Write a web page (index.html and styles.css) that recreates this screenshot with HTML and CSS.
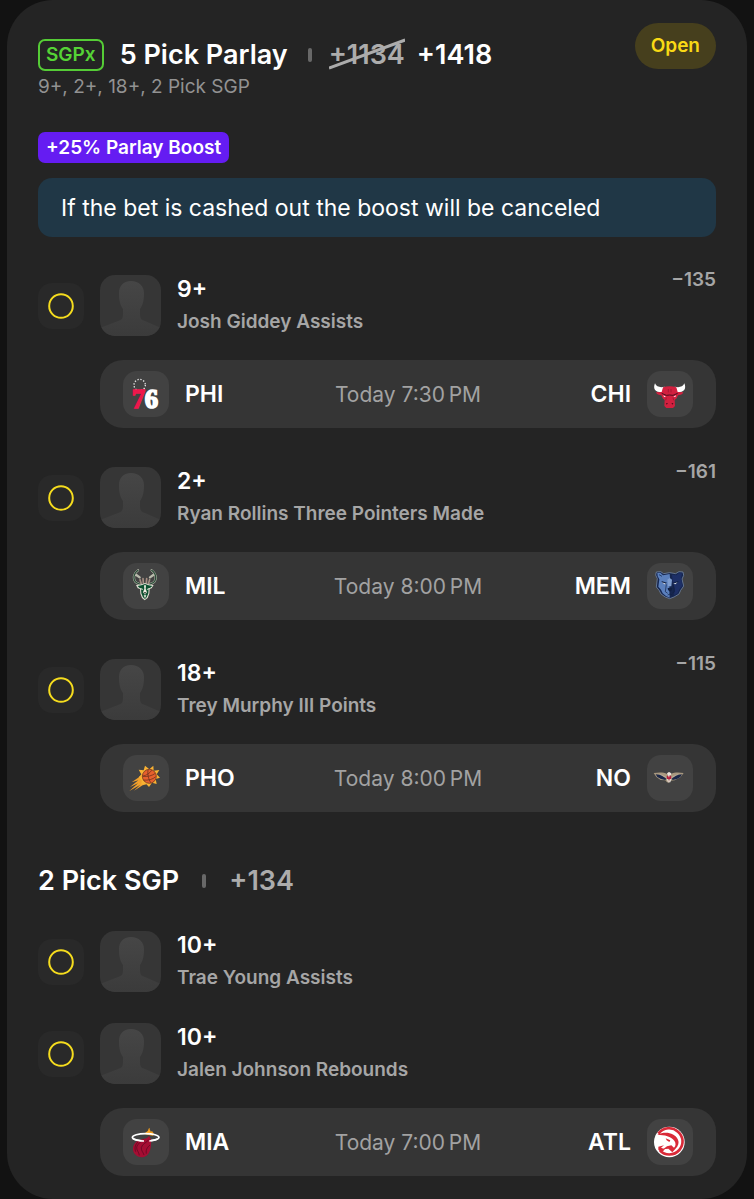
FILE: index.html
```
<!DOCTYPE html>
<html lang="en">
<head>
    <meta charset="UTF-8">
    <meta name="viewport" content="width=device-width, initial-scale=1.0">
    <title>5 Pick Parlay</title>
    <link rel="stylesheet" href="styles.css">
</head>
<body>

<!-- Shared icons -->
<svg class="icon-defs" aria-hidden="true">
    <defs>
        <linearGradient id="personFill" x1="0" y1="0" x2="0" y2="1">
            <stop offset="0" stop-color="#464646"/>
            <stop offset="1" stop-color="#3b3b3b"/>
        </linearGradient>
        <symbol id="person" viewBox="0 0 61 61">
            <path fill="url(#personFill)" d="M31 6c-8 0-12 5-12 12 0 7 1 12 4 16v5c0 4-1 6-5 7L0 53v8h61v-8l-16-7c-4-1-5-3-5-7v-5c3-4 4-9 4-16 0-7-5-12-13-12z"/>
        </symbol>
        <symbol id="ring" viewBox="0 0 46 46">
            <circle cx="23" cy="23" r="11.8" fill="none" stroke="#f5dc1e" stroke-width="2"/>
        </symbol>
    </defs>
</svg>

<main class="bet-card">
    <header class="bet-header">
        <div class="bet-summary">
            <div class="title-row">
                <span class="sgp-badge">SGPx</span>
                <h1 class="title">5 Pick Parlay</h1>
                <span class="divider"></span>
                <span class="prices">
                    <del class="old-price">+1134<svg class="strike" viewBox="0 0 77 32" preserveAspectRatio="none"><path d="M0 30L77 2" stroke="#acacac" stroke-width="3"/></svg></del>
                    <span class="new-price">+1418</span>
                </span>
            </div>
            <p class="subtitle">9+, 2+, 18+, 2 Pick SGP</p>
        </div>
        <span class="status">Open</span>
    </header>

    <span class="boost">+25% Parlay Boost</span>
    <p class="notice">If the bet is cashed out the boost will be canceled</p>

    <section class="leg">
        <div class="pick">
            <svg class="pick-state"><use href="#ring"/></svg>
            <svg class="avatar"><use href="#person"/></svg>
            <div class="pick-text">
                <h2 class="pick-line">9+</h2>
                <p class="pick-market">Josh Giddey Assists</p>
            </div>
            <span class="pick-odds">−135</span>
        </div>
        <div class="match">
            <div class="team">
                <svg class="logo" viewBox="22 22 138 138">
                    <circle cx="72" cy="64" r="17" fill="none" stroke="#e4e4e4" stroke-width="4" stroke-dasharray="4 4.9"/>
                    <text class="logo-digit" x="48" y="134" fill="#ed174c" stroke="#ed174c" stroke-width="4">7</text>
                    <text class="logo-digit" x="87" y="134" fill="#ffffff" stroke="#ffffff" stroke-width="5">6</text>
                </svg>
                <span>PHI</span>
            </div>
            <time class="match-time">Today 7:30&#8239;PM</time>
            <div class="team away">
                <span>CHI</span>
                <svg class="logo" viewBox="22 22 138 138">
                    <path fill="#ffffff" d="M46 59c-6 14-1 25 13 26l15 1 1-17c-11 3-25 2-29-10zM134 59c6 14 1 25-13 26l-15 1-1-17c11 3 25 2 29-10z"/>
                    <path fill="#d2203f" d="M70 71c12-4 28-4 40 0l4 14 17 1c-3 7-8 9-16 9l-4 9-6 5 1 18-6 6H80l-6-6 1-18-6-5-4-9c-8 0-13-2-16-9l17-1z"/>
                    <path fill="none" stroke="#4a0f1d" stroke-width="3" d="M66 89l14 6 10-1 10 1 14-6"/>
                    <path fill="none" stroke="#8e1730" stroke-width="2" d="M80 102l-2 8M100 102l2 8M86 76v10M94 76v10"/>
                    <path fill="#ffffff" d="M71 95l8 4-6 1zM109 95l-8 4 6 1z"/>
                    <path fill="#4a0f1d" d="M79 118l6 1-4 4zM101 118l-6 1 4 4z"/>
                </svg>
            </div>
        </div>
    </section>

    <section class="leg">
        <div class="pick">
            <svg class="pick-state"><use href="#ring"/></svg>
            <svg class="avatar"><use href="#person"/></svg>
            <div class="pick-text">
                <h2 class="pick-line">2+</h2>
                <p class="pick-market">Ryan Rollins Three Pointers Made</p>
            </div>
            <span class="pick-odds">−161</span>
        </div>
        <div class="match">
            <div class="team">
                <svg class="logo" viewBox="22 22 138 138">
                    <g fill="none" stroke-linecap="round" stroke-linejoin="round">
                        <path stroke="#b9bbac" stroke-width="7" d="M67 44c-17 13-16 35 2 40l9 5M108 44c17 13 16 35-2 40l-9 5M62 58l10 7M113 58l-10 7"/>
                        <path stroke="#2c4d3a" stroke-width="4" d="M67 44c-17 13-16 35 2 40l9 5M108 44c17 13 16 35-2 40l-9 5"/>
                        <path stroke="#a58e82" stroke-width="5" d="M77 84l-4-12M98 84l4-12M83 82l-1-13M92 82l1-13"/>
                    </g>
                    <path fill="#dcdccf" d="M77 86l11-4 11 4 15 2-6 10-6 2-1 14-5 13-9 7-8-7-5-13-1-14-7-2-5-10z"/>
                    <path fill="#0d5130" d="M77 89l11-4 11 4 11 2-6 5-5 2-1 15-5 12-5 5-6-5-5-12-1-15-5-2-5-5z"/>
                    <path fill="#f1efe2" d="M85 89h6l-1 11 4 10-6 7-6-7 4-10zM76 97l7 4-5 2zM100 97l-7 4 5 2zM84 119h8l-4 9z"/>
                    <path fill="#12251b" d="M84 110h8l-4 5z"/>
                </svg>
                <span>MIL</span>
            </div>
            <time class="match-time">Today 8:00&#8239;PM</time>
            <div class="team away">
                <span>MEM</span>
                <svg class="logo" viewBox="22 22 138 138">
                    <path fill="#16264f" stroke="#7f95b5" stroke-width="2" stroke-linejoin="round" d="M50 49l13-1 9 6 18-3 18 3 10-6 12 1 2 10-5 11 5 21-9 13-5 11-15 9-13 5-13-5-13-9-5-10-9-11 3-25-5-11z"/>
                    <path fill="#5b80bd" d="M53 52l9-1 8 8 20-4 2 21-3 19 1 31-11-5-10-8-5-11-8-9 3-22-5-9z"/>
                    <path fill="#1d2f66" d="M97 57l13 2 8-7 9 1-3 14 4 23-9 11-5 12-11 6 3-19-7-18z"/>
                    <path fill="#101f42" d="M65 76l17 5-5 4-8-3zM117 76l-18 5 5 4 9-3zM84 97h14l-2 7-5 4-6-5z"/>
                    <path fill="#7e9dd0" d="M83 72l7-5 7 5-2 20H85z"/>
                    <path fill="#e8edf3" d="M67 80l12 4-5 2zM114 80l-13 4 6 2z"/>
                    <path fill="none" stroke="#101f42" stroke-width="2" d="M80 86l-3 22 7 5M101 86l3 22-6 5M84 118l7-3 7 3M58 57l9 5"/>
                </svg>
            </div>
        </div>
    </section>

    <section class="leg">
        <div class="pick">
            <svg class="pick-state"><use href="#ring"/></svg>
            <svg class="avatar"><use href="#person"/></svg>
            <div class="pick-text">
                <h2 class="pick-line">18+</h2>
                <p class="pick-market">Trey Murphy III Points</p>
            </div>
            <span class="pick-odds">−115</span>
        </div>
        <div class="match">
            <div class="team">
                <svg class="logo" viewBox="22 22 138 138">
                    <path fill="#f2a12b" d="M74 86L48 104l20-6-25 20 24-11-26 23 33-19-19 18 26-16 12-3-14-22z"/>
                    <path fill="#f9b233" d="M101 65l12-11 1 15 17-2-8 13 10 10-13 4 3 15-14-4-9 13-9-10-14 4 1-14-9-9 8-9-8-14 15 2 4-14z"/>
                    <circle cx="101" cy="86" r="21" fill="#e7602d" stroke="#5a2b1d" stroke-width="2"/>
                    <path fill="none" stroke="#5a2b1d" stroke-width="2" d="M81 86c14 2 29-2 38-9M83 97c14 2 29-2 37-10M97 67c-2 12 1 27 8 38M108 68c-6 9-15 15-26 17"/>
                </svg>
                <span>PHO</span>
            </div>
            <time class="match-time">Today 8:00&#8239;PM</time>
            <div class="team away">
                <span>NO</span>
                <svg class="logo" viewBox="22 22 138 138">
                    <path fill="#a8987f" d="M42 76c15-2 30-3 40 3l6-5 6 5c10-6 25-5 38-3l-10 13-17 9-12 1-5 6-6-1-5-6-14-1-13-9z"/>
                    <path fill="#1b2748" d="M48 80l16 2 16 11-3 4-13-3-11-6zM127 80l-16 2-15 11 3 4 13-3 10-6z"/>
                    <path fill="none" stroke="#c4b8a5" stroke-width="2" d="M60 80l20 9M116 80l-20 9"/>
                    <path fill="#b51e3b" d="M81 86l7-4 7 4-1 6-6 5-6-5z"/>
                    <path fill="#e9e3dc" d="M82 77l6-4 7 4-1 5-4 1-2 7-3-7zM81 93l7 4 7-4-3 11h-7z"/>
                    <path fill="#b38876" d="M86 96h4l-2 9z"/>
                </svg>
            </div>
        </div>
    </section>

    <div class="group-title">
        <h2 class="title">2 Pick SGP</h2>
        <span class="divider"></span>
        <span class="group-odds">+134</span>
    </div>

    <section class="leg group-leg">
        <div class="pick">
            <svg class="pick-state"><use href="#ring"/></svg>
            <svg class="avatar"><use href="#person"/></svg>
            <div class="pick-text">
                <h2 class="pick-line">10+</h2>
                <p class="pick-market">Trae Young Assists</p>
            </div>
        </div>
        <div class="pick">
            <svg class="pick-state"><use href="#ring"/></svg>
            <svg class="avatar"><use href="#person"/></svg>
            <div class="pick-text">
                <h2 class="pick-line">10+</h2>
                <p class="pick-market">Jalen Johnson Rebounds</p>
            </div>
        </div>
        <div class="match">
            <div class="team">
                <svg class="logo" viewBox="22 22 138 138">
                    <path fill="#f9a01b" d="M88 68c0-6 5-7 8-10 3-4 1-7 6-10-2 6 3 8 3 12l5-2c-1 5 5 4 5 10l-4 4z"/>
                    <ellipse cx="90" cy="77" rx="40" ry="11" fill="none" stroke="#ffffff" stroke-width="5"/>
                    <path fill="#a50d33" d="M76 84c8-4 20-3 24-12 5 8 8 14 6 24 0 16-4 26-11 34-11 10-27 9-37-2-10-13-7-29 4-38 4-4 9-4 14-6z"/>
                    <path fill="none" stroke="#55091f" stroke-width="2" d="M83 84c-6 8-18 11-20 22-1 10 7 15 8 25M99 84c-6 10-20 12-22 24-1 9 6 14 8 22M103 100c-7 7-13 11-11 26M68 90c-9 8-12 18-8 30"/>
                    <path fill="none" stroke="#ffffff" stroke-width="5" d="M51 80c8 6 20 8 34 8M101 88c10-1 19-3 25-6"/>
                </svg>
                <span>MIA</span>
            </div>
            <time class="match-time">Today 7:00&#8239;PM</time>
            <div class="team away">
                <span>ATL</span>
                <svg class="logo" viewBox="22 22 138 138">
                    <circle cx="89" cy="91" r="46" fill="#ffffff"/>
                    <path fill="none" stroke="#d92a38" stroke-width="8" d="M56 66c15-19 42-22 59-6 17 15 18 39 4 55-16 18-44 17-58 2"/>
                    <path fill="#d92a38" d="M53 69c25-11 52-5 62 15 4 9 1 18-8 28l-9 10-12-11-16 2 12-9 13-3 8 7c6-6 6-14 1-21-10-14-29-17-51-18zM56 105l17-4-9 7 12 5-11 10-9-9zM78 80l14 6-3 5-8-5z"/>
                </svg>
            </div>
        </div>
    </section>
</main>

</body>
</html>
```
FILE: styles.css
```
* {
    box-sizing: border-box;
}

body {
    margin: 0;
    padding: 0 7px;
    background-color: #121212;
    font-family: Inter, "Liberation Sans", sans-serif;
    color: #ffffff;
}

h1, h2, p {
    margin: 0;
}

.icon-defs {
    position: absolute;
    width: 0;
    height: 0;
}

.bet-card {
    padding: 23px 31px;
    background-color: #242424;
    border-radius: 46px;
}

.bet-header {
    display: flex;
    justify-content: space-between;
    align-items: flex-start;
    margin-bottom: 31px;
}

.bet-summary {
    padding-top: 15px;
}

.title-row,
.group-title {
    display: flex;
    align-items: center;
    font-size: 27px;
    font-weight: 600;
    line-height: 34px;
}

.title {
    font-size: 27px;
    font-weight: 600;
    line-height: 34px;
}

.sgp-badge {
    height: 32px;
    margin-right: 16px;
    padding: 0 6px;
    border: 2px solid #55cc36;
    border-radius: 7px;
    color: #55d336;
    font-size: 19px;
    line-height: 28px;
}

.divider {
    width: 4px;
    height: 14px;
    margin: 0 17px 0 20px;
    background-color: #686868;
    border-radius: 2px;
}

.prices {
    display: flex;
    gap: 12px;
}

.old-price {
    position: relative;
    color: #acacac;
    text-decoration: none;
}

/* slanted line over the old price */
.strike {
    position: absolute;
    top: 0;
    left: 0;
    width: 100%;
    height: 32px;
}

.subtitle {
    margin-top: 1px;
    color: #929292;
    font-size: 19px;
    line-height: 28px;
}

.status {
    padding: 0 16px;
    background-color: #463f1d;
    border-radius: 23px;
    color: #f9d915;
    font-size: 19px;
    font-weight: 600;
    line-height: 46px;
}

.boost {
    display: block;
    width: fit-content;
    padding: 0 8px;
    background-color: #651cf2;
    border-radius: 7px;
    font-size: 19px;
    font-weight: 600;
    line-height: 31px;
}

.notice {
    margin: 15px 0 38px;
    padding: 15px 23px 13px;
    background-color: #203746;
    border-radius: 14px;
    font-size: 23px;
    line-height: 31px;
}

.leg {
    display: flex;
    flex-direction: column;
    gap: 24px;
    margin-bottom: 39px;
}

.pick {
    display: flex;
    align-items: center;
    gap: 16px;
}

.pick-state {
    width: 46px;
    height: 46px;
    background-color: #292929;
    border-radius: 14px;
}

.avatar {
    width: 61px;
    height: 61px;
    background-color: #363636;
    border-radius: 15px;
}

.pick-text {
    flex: 1;
}

.pick-line {
    font-size: 23px;
    font-weight: 600;
    line-height: 28px;
}

.pick-market {
    margin-top: 5px;
    color: #a6a6a6;
    font-size: 19px;
    font-weight: 600;
    line-height: 28px;
}

.pick-odds {
    align-self: flex-start;
    color: #a6a6a6;
    font-size: 19px;
    font-weight: 600;
    line-height: 10px;
}

.match {
    display: grid;
    grid-template-columns: 1fr auto 1fr;
    align-items: center;
    margin-left: 62px;
    padding: 11px 23px;
    background-color: #353535;
    border-radius: 23px;
}

.team {
    display: flex;
    align-items: center;
    gap: 16px;
    font-size: 23px;
    font-weight: 600;
}

.away {
    justify-content: flex-end;
}

.logo {
    width: 46px;
    height: 46px;
    background-color: #424242;
    border-radius: 14px;
}

.logo-digit {
    font-family: "Liberation Serif", serif;
    font-size: 80px;
    font-weight: 700;
}

.match-time {
    color: #a2a2a2;
    font-size: 21px;
}

.group-title {
    margin: 52px 0 33px;
}

.group-title .divider {
    margin: 0 23px;
}

.group-odds {
    color: #acacac;
}

.group-leg {
    margin-bottom: 0;
}

.group-leg .pick + .pick {
    margin-top: 7px;
}
```
